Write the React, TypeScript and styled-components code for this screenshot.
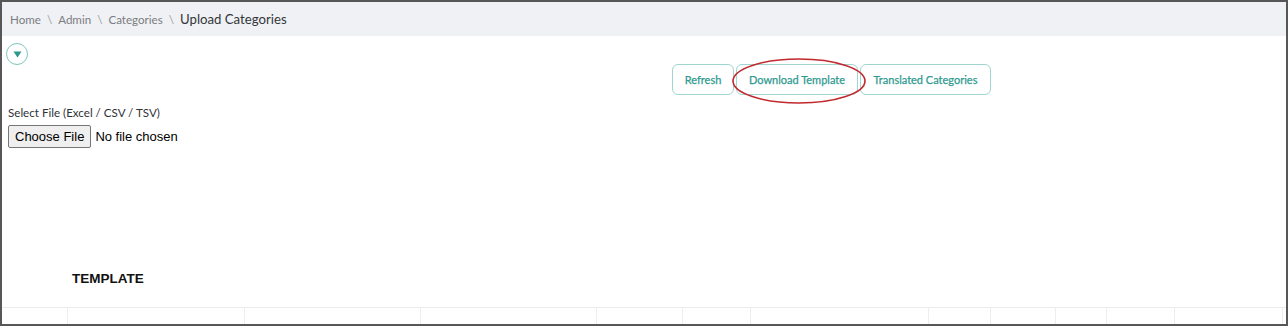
import React from "react";
import styled, { createGlobalStyle } from "styled-components";

const Global = createGlobalStyle`
  html, body { margin: 0; padding: 0; background: #ffffff; }
  * { box-sizing: border-box; }
`;

const Frame = styled.div`
  width: 1288px;
  height: 326px;
  border: 2px solid #575757;
  display: flex;
  flex-direction: column;
  overflow: hidden;
  position: relative;
  font-family: Lato, "Open Sans", sans-serif;
  background: #fff;
`;

const Crumbs = styled.nav`
  height: 34px;
  flex: none;
  background: #f0f1f4;
  display: flex;
  align-items: center;
  padding-left: 8px;
  font-size: 11.6px;
  color: #7a7d82;
`;

const Sep = styled.span`
  margin: 0 6px;
  color: #9a9da2;
`;

const Current = styled.span`
  font-size: 13.2px;
  color: #33363b;
`;

const Content = styled.main`
  flex: 1;
  display: flex;
  flex-direction: column;
`;

const Toggle = styled.button`
  margin: 7px 0 0 4px;
  width: 22px;
  height: 22px;
  border-radius: 50%;
  border: 1px solid #7fc5bb;
  background: #fff;
  padding: 0;
  display: flex;
  align-items: center;
  justify-content: center;
`;

const Toolbar = styled.div`
  display: flex;
  justify-content: flex-end;
  gap: 2px;
  padding-right: 295px;
  margin-top: -1px;
`;

const ActionButton = styled.button<{ $w: number }>`
  width: ${(p) => p.$w}px;
  height: 31px;
  border: 1px solid #9fd6cf;
  border-radius: 6px;
  background: #fff;
  color: #2f9a90;
  font-family: Lato, "Open Sans", sans-serif;
  font-size: 11px;
  font-weight: 400;
  -webkit-text-stroke: 0.25px #2f9a90;
  padding: 0;
`;

const Ellipse = styled.svg`
  position: absolute;
  left: 729px;
  top: 55px;
  overflow: visible;
  pointer-events: none;
`;

const Label = styled.label`
  margin: 11px 0 0 6px;
  font-size: 11.6px;
  color: #2f3236;
  line-height: 14px;
`;

const FileInput = styled.input`
  margin: 5px 0 0 6px;
  font-family: "Liberation Sans", Arial, sans-serif;
  font-size: 13px;
  color: #000;
  &::file-selector-button {
    font-family: "Liberation Sans", Arial, sans-serif;
    font-size: 13px;
    height: 23px;
    padding: 1px 6px;
    margin-right: 4px;
    background: #efefef;
    border: 1px solid #767676;
    border-radius: 2px;
    color: #000;
  }
`;

const Heading = styled.h3`
  margin: 123px 0 0 70px;
  font-family: "Liberation Sans", Arial, sans-serif;
  font-size: 13.5px;
  font-weight: 700;
  color: #111;
  line-height: 16px;
`;

const Table = styled.div`
  margin-top: 20px;
  flex: 1;
  display: grid;
  grid-template-columns: 65px 177px 176px 176px 86px 68px 178px 62px 65px 51px 68px 108px 1fr;
  border-top: 1px solid #ebebeb;
`;

const Cell = styled.div`
  border-left: 1px solid #eeeeee;
  &:first-child { border-left: none; }
`;

const cols = Array.from({ length: 13 });

export default function App() {
  return (
    <>
      <Global />
      <Frame>
        <Crumbs>
          <span>Home</span>
          <Sep>\</Sep>
          <span>Admin</span>
          <Sep>\</Sep>
          <span>Categories</span>
          <Sep>\</Sep>
          <Current>Upload Categories</Current>
        </Crumbs>
        <Content>
          <Toggle aria-label="toggle">
            <svg width="9" height="7" viewBox="0 0 9 7">
              <path d="M0.5 0.5 H8.5 L4.5 6.5 Z" fill="#2a978b" />
            </svg>
          </Toggle>
          <Toolbar>
            <ActionButton $w={62}>Refresh</ActionButton>
            <ActionButton $w={122}>Download Template</ActionButton>
            <ActionButton $w={131}>Translated Categories</ActionButton>
          </Toolbar>
          <Label>Select File (Excel / CSV / TSV)</Label>
          <FileInput type="file" />
          <Heading>TEMPLATE</Heading>
          <Table>
            {cols.map((_, i) => (
              <Cell key={i} />
            ))}
          </Table>
        </Content>
        <Ellipse width="136" height="48" viewBox="0 0 136 48">
          <ellipse cx="68" cy="24" rx="66" ry="22" fill="none" stroke="#c2282e" strokeWidth="1.6" />
        </Ellipse>
      </Frame>
    </>
  );
}
